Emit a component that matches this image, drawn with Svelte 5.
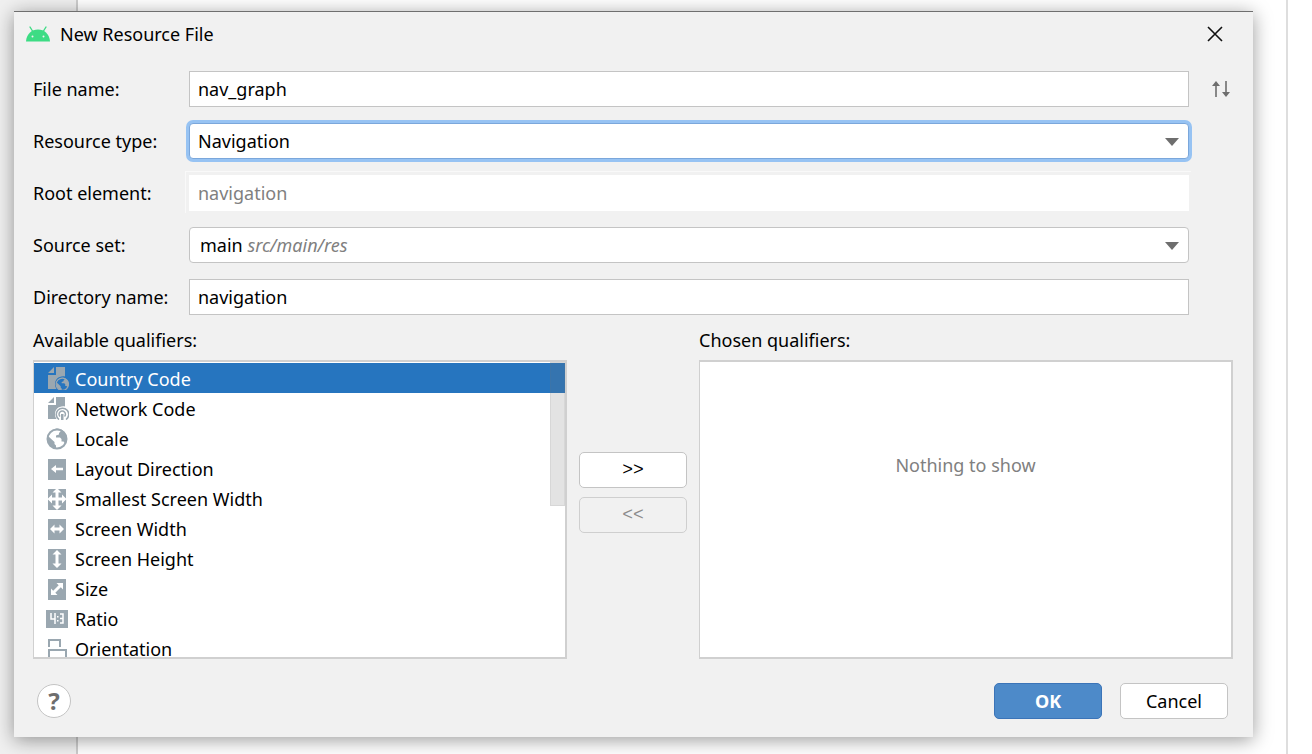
<script lang="ts">
  type Icon = 'country' | 'network' | 'locale' | 'left' | 'all' | 'width' | 'height' | 'size' | 'ratio' | 'orientation';

  const qualifiers: { name: string; icon: Icon }[] = [
    { name: 'Country Code', icon: 'country' },
    { name: 'Network Code', icon: 'network' },
    { name: 'Locale', icon: 'locale' },
    { name: 'Layout Direction', icon: 'left' },
    { name: 'Smallest Screen Width', icon: 'all' },
    { name: 'Screen Width', icon: 'width' },
    { name: 'Screen Height', icon: 'height' },
    { name: 'Size', icon: 'size' },
    { name: 'Ratio', icon: 'ratio' },
    { name: 'Orientation', icon: 'orientation' }
  ];

  // white arrows on the grey tile
  const arrows: Partial<Record<Icon, string>> = {
    left: 'M6 13l5-4v2.700h7v2.600h-7V17z',
    all: 'M12 2l4.500 4.500h-3v5H17V8.500L21.500 13 17 17.500v-3h-3.500v5h3L12 24l-4.500-4.500h3v-5H7v3L2.500 13 7 8.500v3h3.500v-5h-3z',
    width: 'M5 13l4.500-4.500v3h5v-3L19 13l-4.500 4.500v-3h-5v3z',
    height: 'M12 4l4.500 4.500h-3v9h3L12 22l-4.500-4.500h3v-9h-3z',
    size: 'M18 7v6.500l-2.200-2.200-5.500 5.500L12.500 19H6v-6.500l2.200 2.200 5.500-5.500L11.500 7z'
  };

  let fileName = $state('nav_graph');
  let directory = $state('navigation');
  let selected = $state(0);
</script>

{#snippet globe()}
  <circle cx="12" cy="13" r="9.500" fill="none" stroke="currentColor" stroke-width="2" />
  <path
    fill="currentColor"
    d="M3 10l6.500 6v2l1.500 1.500V22C6 22 2 18 3 10zM10 3h5.500v2.500L14 7v1.500l-3 1v2H15l1.500 1.500v2.500h2l1.500 2c2-3 2.500-8-1-11.500C16 2.500 13 2 10 3z"
  />
{/snippet}

<main>
  <section class="dialog" aria-labelledby="title">
    <header>
      <svg class="android" width="24" height="16" viewBox="0 0 24 16" aria-hidden="true">
        <path d="M4 1l2.500 4M20 1l-2.500 4" stroke="#3ddc84" stroke-width="1.400" stroke-linecap="round" />
        <path d="M0 15.500C.5 8 5.500 3.500 12 3.500S23.500 8 24 15.500z" fill="#3ddc84" />
        <circle cx="6.500" cy="10.500" r="1" fill="#f1f1f1" />
        <circle cx="17.500" cy="10.500" r="1" fill="#f1f1f1" />
      </svg>
      <h1 id="title">New Resource File</h1>
      <button class="plain" aria-label="Close">
        <svg width="16" height="16" viewBox="0 0 16 16">
          <path d="M1 1l14 14M15 1L1 15" stroke="#111" stroke-width="1.600" />
        </svg>
      </button>
    </header>

    <div class="form">
      <label for="file">File name:</label>
      <input id="file" type="text" bind:value={fileName} />
      <button class="plain" aria-label="Swap">
        <svg width="20" height="16" viewBox="0 0 20 16">
          <path d="M5 2v14M15 0v13" stroke="#6e6e6e" stroke-width="1.600" />
          <path d="M5 0l4 5H1zM15 16l4-5h-8z" fill="#6e6e6e" />
        </svg>
      </button>

      <label for="type">Resource type:</label>
      <div class="combo focused">
        <select id="type">
          <option>Navigation</option>
        </select>
        <svg width="14" height="8" viewBox="0 0 14 8" aria-hidden="true"><path d="M0 0h14L7 8z" fill="#6e6e6e" /></svg>
      </div>

      <label for="root">Root element:</label>
      <input id="root" type="text" value="navigation" disabled />

      <label for="source">Source set:</label>
      <div class="combo">
        <select id="source">
          <option value="main" label=" "></option>
        </select>
        <span class="value">main <i>src/main/res</i></span>
        <svg width="14" height="8" viewBox="0 0 14 8" aria-hidden="true"><path d="M0 0h14L7 8z" fill="#6e6e6e" /></svg>
      </div>

      <label for="dir">Directory name:</label>
      <input id="dir" type="text" bind:value={directory} />
    </div>

    <div class="qualifiers">
      <div class="pane">
        <h2>Available qualifiers:</h2>
        <div class="box">
          <ul>
            {#each qualifiers as q, i}
              <li>
                <button class:selected={selected === i} onclick={() => (selected = i)}>
                  <svg width="24" height="24" viewBox="0 0 24 24" aria-hidden="true">
                    {#if q.icon === 'country' || q.icon === 'network'}
                      <path fill="currentColor" d="M3 7l6-6v6zM11 1h9v9.500c-6-1-10 3-10 7.500 0 2 .5 3.500 1.500 5H3V9h8z" />
                      {#if q.icon === 'country'}
                        <g transform="translate(9.500 9.800) scale(.65)">{@render globe()}</g>
                      {:else}
                        <path
                          fill="none"
                          stroke="currentColor"
                          stroke-width="1.500"
                          d="M14 23.500a6.200 6.200 0 1 1 7 0M15 20.500a3.200 3.200 0 1 1 4.500 0"
                        />
                        <path fill="currentColor" d="M16 18h2.500v6H16z" />
                      {/if}
                    {:else if q.icon === 'locale'}
                      {@render globe()}
                    {:else if q.icon === 'ratio'}
                      <path fill="currentColor" d="M1 4h22v18H1z" />
                      <path
                        fill="none"
                        stroke="#fff"
                        stroke-width="1.500"
                        d="M6 7v6h4M10 7v11M15 8h3v9h-3M15 12.500h3"
                      />
                      <path fill="#fff" d="M12 10h1.500v1.500H12zM12 14h1.500v1.500H12z" />
                    {:else if q.icon === 'orientation'}
                      <path fill="none" stroke="currentColor" stroke-width="2" d="M4 11V4h11v7M4 26V14h17v12" />
                    {:else}
                      <path fill="currentColor" d="M3 3h18v21H3z" />
                      <path fill="#fff" d={arrows[q.icon]} />
                    {/if}
                  </svg>
                  <span>{q.name}</span>
                </button>
              </li>
            {/each}
          </ul>
          <div class="thumb"></div>
        </div>
      </div>

      <div class="move">
        <button class="btn">&gt;&gt;</button>
        <button class="btn" disabled>&lt;&lt;</button>
      </div>

      <div class="pane">
        <h2>Chosen qualifiers:</h2>
        <div class="box empty">Nothing to show</div>
      </div>
    </div>

    <footer>
      <button class="help" aria-label="Help">?</button>
      <button class="btn ok">OK</button>
      <button class="btn">Cancel</button>
    </footer>
  </section>
</main>

<style>
  :global(body) {
    margin: 0;
  }
  main {
    box-sizing: border-box;
    min-height: 100vh;
    padding: 11px 59px 17px 14px;
    background: linear-gradient(
      to right,
      #f0f0f0 76px,
      #cdcdcd 76px 78px,
      #fff 78px calc(100% - 26px),
      #dedede calc(100% - 26px) calc(100% - 24px),
      #fff calc(100% - 24px)
    );
    font: 18px/24px 'Noto Sans', 'Open Sans', sans-serif;
    color: #000;
  }
  button,
  input,
  select {
    box-sizing: border-box;
    margin: 0;
    font: inherit;
    color: inherit;
  }
  .dialog {
    box-sizing: border-box;
    padding: 0 20px 18px 19px;
    background: #f1f1f1;
    border-top: 1px solid #6f6f6f;
    box-shadow: 0 3px 18px rgba(0, 0, 0, 0.4);
  }
  header {
    display: flex;
    align-items: center;
    height: 43px;
    margin-left: -7px;
    margin-bottom: 16px;
  }
  h1,
  h2 {
    margin: 0;
    font-size: inherit;
    font-weight: 400;
  }
  h1 {
    flex: 1;
    margin-left: 10px;
  }
  .plain {
    display: flex;
    align-items: center;
    justify-content: center;
    padding: 0;
    border: 0;
    background: none;
  }
  header .plain {
    width: 36px;
    height: 36px;
  }
  .form {
    display: grid;
    grid-template-columns: 156px 1fr 44px;
    grid-auto-rows: 36px;
    row-gap: 16px;
    align-items: center;
  }
  .form label {
    grid-column: 1;
  }
  .form .plain {
    justify-content: flex-end;
    padding-right: 2px;
  }
  input,
  .combo {
    height: 36px;
    background: #fff;
    border: 1px solid #c4c4c4;
  }
  input {
    width: 100%;
    padding: 0 8px;
    border-radius: 0;
    outline: none;
  }
  input:disabled {
    color: #808080;
    border-color: #fff;
    box-shadow:
      0 0 0 3px #f1f1f1,
      -1px -1px 0 3px #f9f9f9;
  }
  .combo {
    display: grid;
    grid-template-columns: 1fr 23px;
    align-items: center;
    box-sizing: border-box;
    border-radius: 4px;
  }
  .combo > * {
    grid-row: 1;
  }
  .combo select {
    grid-column: 1 / 3;
    height: 34px;
    padding: 0 8px;
    border: 0;
    background: none;
    appearance: none;
    outline: none;
  }
  .combo svg {
    grid-column: 2;
    margin-top: 2px;
    pointer-events: none;
  }
  .combo .value {
    grid-column: 1;
    padding-left: 10px;
    pointer-events: none;
  }
  .combo i {
    color: #808080;
  }
  .focused {
    border-color: #7ba7db;
    box-shadow: 0 0 0 3px #97c3f3;
  }
  .qualifiers {
    display: grid;
    grid-template-columns: 1fr 108px 1fr;
    column-gap: 12px;
    margin-top: 13px;
  }
  .pane {
    min-width: 0;
  }
  .box {
    position: relative;
    box-sizing: border-box;
    height: 299px;
    margin-top: 8px;
    background: #fff;
    border: solid #d0d0d0;
    border-width: 2px 2px 2px 1px;
    overflow: hidden;
  }
  ul {
    height: 100%;
    margin: 0;
    padding: 1px 0 0;
    box-sizing: border-box;
    list-style: none;
    overflow-y: auto;
    scrollbar-width: none;
  }
  li button {
    display: flex;
    align-items: center;
    gap: 6px;
    width: 100%;
    height: 30px;
    padding: 0 11px;
    border: 0;
    background: none;
    text-align: left;
  }
  li svg {
    color: #9aa7b0;
  }
  li span {
    padding-top: 2px;
  }
  li .selected {
    background: #2675bf;
    color: #fff;
  }
  .thumb {
    position: absolute;
    top: 0;
    right: 0;
    width: 15px;
    height: 144px;
    box-sizing: border-box;
    background: rgba(115, 115, 115, 0.2);
    border: 1px solid rgba(115, 115, 115, 0.1);
    pointer-events: none;
  }
  .empty {
    padding-top: 91px;
    color: #808080;
    text-align: center;
  }
  .move {
    display: flex;
    flex-direction: column;
    justify-content: center;
    gap: 9px;
    padding-bottom: 3px;
    font-family: 'Liberation Mono', monospace;
  }
  .btn {
    width: 108px;
    height: 36px;
    padding: 0;
    background: #fff;
    border: 1px solid #c4c4c4;
    border-radius: 5px;
  }
  .btn:disabled {
    background: none;
    border-color: #cfcfcf;
    color: #8c8c8c;
  }
  .ok {
    background: #4d8ac9;
    border-color: #3b74b8;
    color: #fff;
    font-weight: 700;
  }
  footer {
    display: flex;
    align-items: center;
    gap: 18px;
    margin-top: 24px;
    padding: 0 5px 0 4px;
  }
  .help {
    width: 34px;
    height: 34px;
    margin-right: auto;
    padding: 0;
    background: #fff;
    border: 1px solid #c4c4c4;
    border-radius: 50%;
    color: #6e6e6e;
    font-size: 24px;
    font-weight: 700;
  }
</style>
